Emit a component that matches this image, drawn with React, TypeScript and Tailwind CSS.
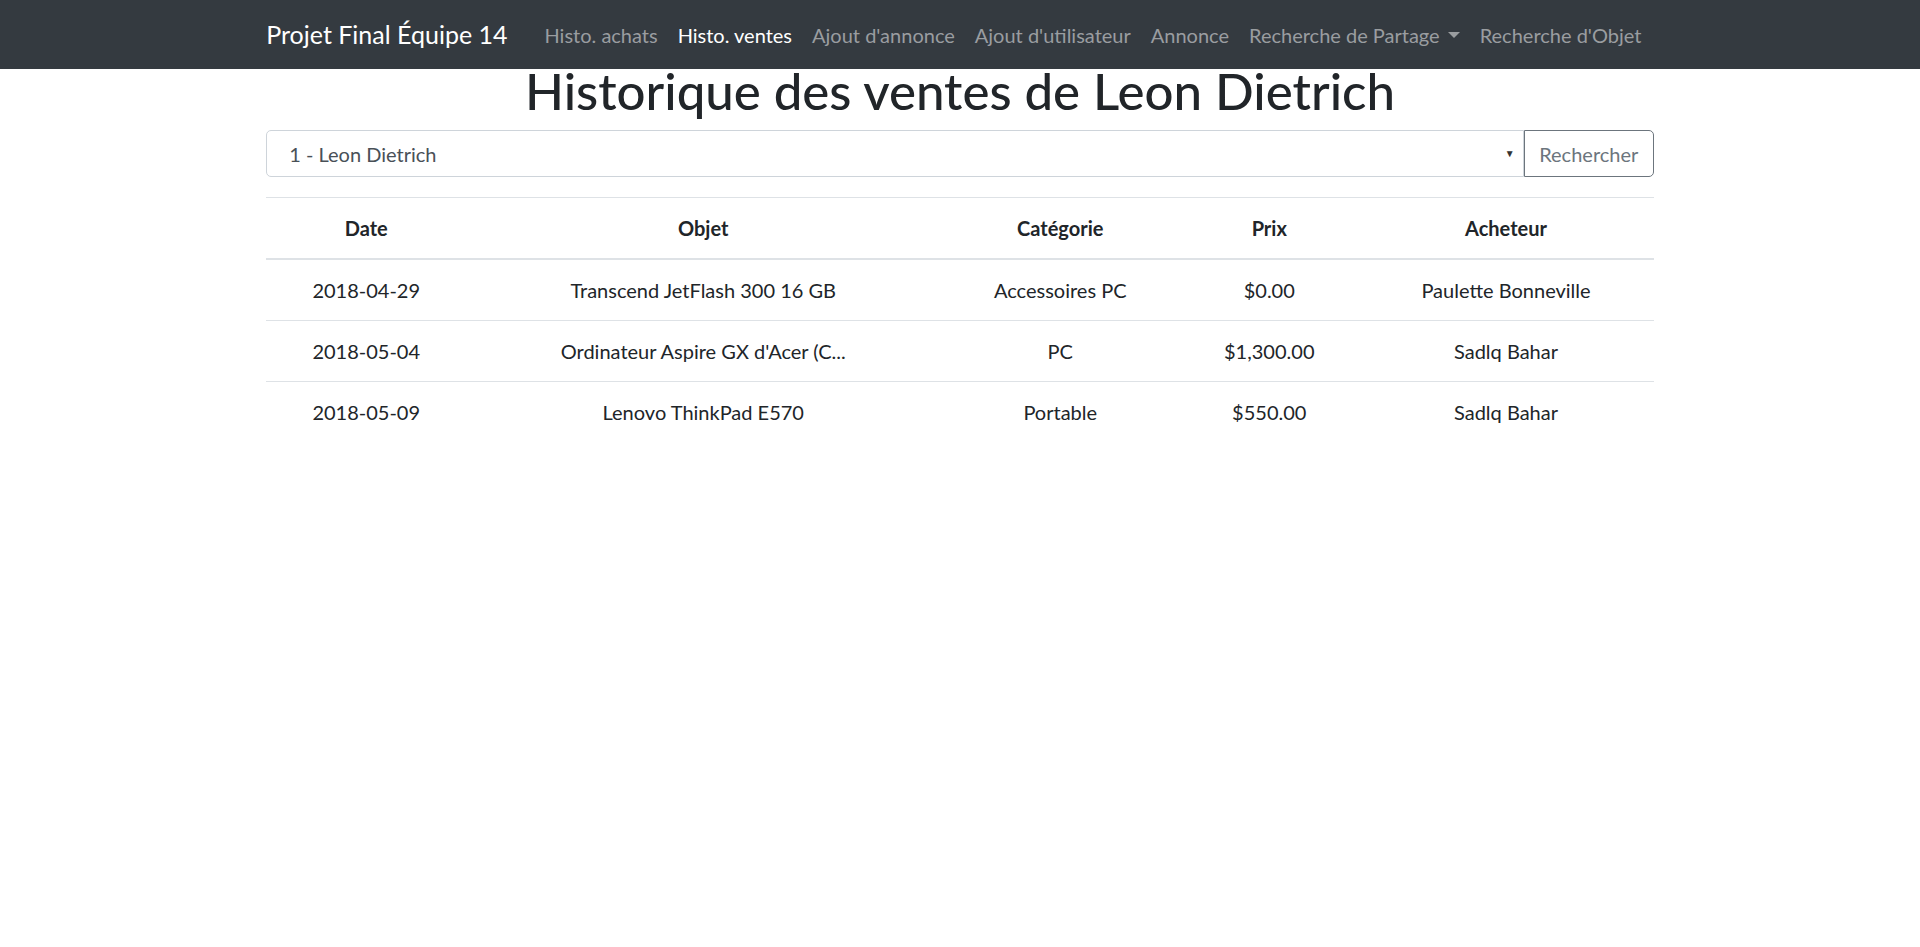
const links = [
  { label: 'Histo. achats', active: false },
  { label: 'Histo. ventes', active: true },
  { label: "Ajout d'annonce", active: false },
  { label: "Ajout d'utilisateur", active: false },
  { label: 'Annonce', active: false },
  { label: 'Recherche de Partage', active: false, dropdown: true },
  { label: "Recherche d'Objet", active: false },
];

const ventes = [
  { date: '2018-04-29', objet: 'Transcend JetFlash 300 16 GB', cat: 'Accessoires PC', prix: '$0.00', acheteur: 'Paulette Bonneville' },
  { date: '2018-05-04', objet: "Ordinateur Aspire GX d'Acer (C...", cat: 'PC', prix: '$1,300.00', acheteur: 'Sadlq Bahar' },
  { date: '2018-05-09', objet: 'Lenovo ThinkPad E570', cat: 'Portable', prix: '$550.00', acheteur: 'Sadlq Bahar' },
];

export default function App() {
  return (
    <div className="min-h-[947px] bg-white text-[#212529] font-['Lato','Open_Sans',sans-serif]">
      {/* Navbar */}
      <nav className="h-[69px] bg-[#343a40]">
        <div className="mx-auto flex h-full w-[1387.5px] items-center whitespace-nowrap">
          <a className="mr-[20px] shrink-0 pr-[7px] text-[25px] leading-[37px] text-white">Projet Final Équipe 14</a>
          <ul className="flex shrink-0 items-center">
            {links.map((l) => (
              <li key={l.label} className="shrink-0 px-[10px]">
                <a
                  className={
                    'flex items-center text-[20px] leading-[30px] ' +
                    (l.active ? 'text-white' : 'text-[#9a9da0]')
                  }
                >
                  {l.label}
                  {l.dropdown && (
                    <span className="ml-[8px] inline-block h-0 w-0 border-x-[6px] border-t-[6px] border-x-transparent border-t-[#9a9da0]" />
                  )}
                </a>
              </li>
            ))}
          </ul>
        </div>
      </nav>

      <main className="mx-auto w-[1387.5px]">
        <h1 className="mb-[17px] text-center text-[51px] font-medium leading-[44px]">Historique des ventes de Leon Dietrich</h1>

        {/* Select + bouton */}
        <div className="flex h-[47px]">
          <div className="flex flex-1 items-center justify-between rounded-l-[5px] border border-[#ced4da] pl-[22px] pr-[8px] text-[20px] text-[#495057]">
            <span>1 - Leon Dietrich</span>
            <span className="text-[10px] text-[#333]">▼</span>
          </div>
          <button className="w-[130px] rounded-r-[5px] border border-[#6c757d] text-[20px] text-[#6c757d]">Rechercher</button>
        </div>

        {/* Tableau */}
        <table className="mt-[20px] w-full table-fixed border-collapse text-center text-[20px] leading-[30px]">
          <colgroup>
            <col className="w-[200px]" />
            <col className="w-[474px]" />
            <col className="w-[240px]" />
            <col className="w-[178px]" />
            <col />
          </colgroup>
          <thead>
            <tr>
              {['Date', 'Objet', 'Catégorie', 'Prix', 'Acheteur'].map((h) => (
                <th key={h} className="border-t border-b-[2.5px] border-[#dee2e6] p-[15px] font-bold">
                  {h}
                </th>
              ))}
            </tr>
          </thead>
          <tbody>
            {ventes.map((v) => (
              <tr key={v.date}>
                <td className="border-t border-[#dee2e6] p-[15px]">{v.date}</td>
                <td className="border-t border-[#dee2e6] p-[15px]">{v.objet}</td>
                <td className="border-t border-[#dee2e6] p-[15px]">{v.cat}</td>
                <td className="border-t border-[#dee2e6] p-[15px]">{v.prix}</td>
                <td className="border-t border-[#dee2e6] p-[15px]">{v.acheteur}</td>
              </tr>
            ))}
          </tbody>
        </table>
      </main>
    </div>
  );
}
